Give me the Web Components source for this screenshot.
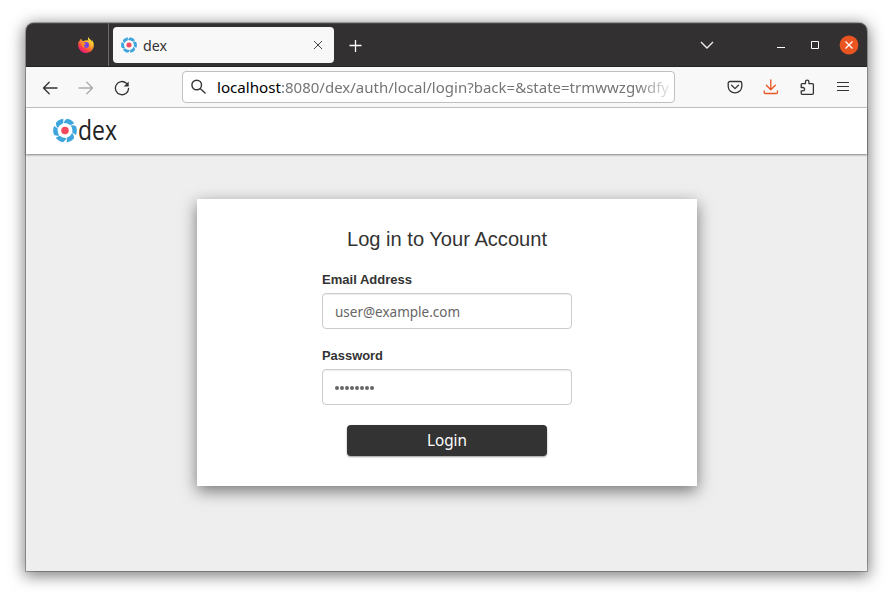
<!DOCTYPE html>
<html lang="en"><head><meta charset="utf-8"><title>dex</title>
<style>html,body{margin:0;background:#fff;height:600px;overflow:hidden}body{font-family:"Noto Sans",sans-serif}</style></head>
<body><desktop-window>
<title-bar slot="chrome"></title-bar>
<nav-bar slot="chrome"></nav-bar>
<dex-header></dex-header>
<login-card></login-card>
</desktop-window>
<script>
const define = (name, html) => customElements.define(name, class extends HTMLElement {
  constructor() { super(); this.attachShadow({ mode: 'open' }).innerHTML = html; }
});

// Single line of text condensed or widened to a given width.
customElements.define('fit-text', class extends HTMLElement {
  connectedCallback() {
    if (this.shadowRoot) return;
    const w = +this.getAttribute('w'), h = +this.getAttribute('h'), b = +this.getAttribute('base');
    const r = this.attachShadow({ mode: 'open' });
    r.innerHTML = `<style>:host{display:block;flex:none;width:${w}px;height:${h}px}svg{display:block;overflow:visible}text{fill:currentColor}</style><svg width="${w}" height="${h}"><text x="0" y="${b}" textLength="${w}" lengthAdjust="spacingAndGlyphs"></text></svg>`;
    r.querySelector('text').textContent = this.getAttribute('text');
  }
});

define('dex-mark', `<style>:host{display:block;flex:none}svg{display:block;width:100%;height:100%}</style>
<svg viewBox="-12 -12 24 24"><g fill="#3fa5dd">
${[30,90,150,210,270,330].map(a => `<path transform="rotate(${a})" d="M-4.2 -11Q0 -12.8 4.4 -10.9L2 -7.2Q-1.5 -8 -5 -5.800Q-5.600 -8.800 -4.200 -11Z"/>`).join('')}
</g><circle r="3.8" fill="#f5495d"/></svg>`);

define('fire-fox', `<style>:host{display:block;width:16px;height:16px}svg{display:block}</style>
<svg width="16" height="16" viewBox="0 0 16 16"><defs><linearGradient id="f" x1=".85" y1=".1" x2=".25" y2=".95"><stop stop-color="#fff044"/><stop offset=".4" stop-color="#ffa52c"/><stop offset=".7" stop-color="#ff4b3c"/><stop offset="1" stop-color="#e4157f"/></linearGradient></defs>
<path fill="url(#f)" d="M10.2 0C9.6 1.8 10 2.7 10.7 3.7C8.7 3 6.6 3.4 5.5 4.1L4.1 3.7L3.1 1.8C2.1 2.6 1.9 3.5 1.8 4.4L1.3 3.4C.4 5 .1 6.5.1 8.2C.3 12.5 3.7 16 8 16C12.4 16 15.8 12.6 15.8 8.3C15.8 6 15 4.3 13.9 3.1L14.2 4.9C13.3 2.8 11.2 2.2 10.2 0Z"/>
<circle cx="8" cy="8" r="3" fill="#7542e5"/><path fill="#ff8a2a" d="M3 6.1C4.9 5.3 6.4 5.8 8.1 6.6C7.9 7.5 6.7 7.4 6.1 7.9C5.8 9 6.5 9.8 7.8 9.9C6 11.6 3.3 9.5 3 6.1Z"/></svg>`);

define('desktop-window', `<style>
:host{display:flex;flex-direction:column;box-sizing:border-box;width:841px;height:548px;margin:23px 0 0 26px;background:#eee;border-radius:8px 8px 0 0;box-shadow:0 0 0 1px rgba(0,0,0,.26),0 3px 15px 2px rgba(0,0,0,.5)}
</style><slot name="chrome"></slot><slot></slot>`);

define('title-bar', `<style>
:host{display:flex;height:44px;flex:none;box-sizing:border-box;background:#333031;border-radius:8px 8px 0 0;border-bottom:1px solid #242222;box-shadow:inset 0 1px #464444;color:#fff}
.app{width:83px;box-sizing:border-box;border-right:1px solid #6b696a;padding:14px 0 0 52px}
.tab{width:221px;height:36px;margin:4px 0 0 4px;border-radius:4px;background:#f8f8f8;color:#333;display:flex;align-items:center;box-sizing:border-box;padding:0 11px 0 8px;font-size:15px}
.tab dex-mark{width:16px;height:16px}.tab fit-text{margin-left:6px}.tab svg{margin-left:auto}
svg{fill:none;display:block;flex:none}.plus{margin:16px 0 0 14px}.right{margin:12px 8px 0 auto;display:flex;align-items:center;height:20px}
</style><div class="app"><fire-fox></fire-fox></div>
<div class="tab"><dex-mark></dex-mark><fit-text text="dex" w="24" h="20" base="16"></fit-text><svg width="10" height="10" stroke="#444"><path d="M1 1l8 8M9 1L1 9"/></svg></div>
<svg class="plus" width="14" height="14" stroke="#fff" stroke-width="1.3"><path d="M7.5 1v12M1.5 6.500h12"/></svg>
<div class="right"><svg width="14" height="14" stroke="#eee" stroke-width="1.4"><path d="M1 4l6 6 6-6"/></svg>
<svg style="margin-left:63px" width="8" height="20"><path d="M0 12.5h8" stroke="#fff"/></svg>
<svg style="margin-left:26px" width="8" height="8"><path d="M.5.5h7v7h-7z" stroke="#fff"/></svg>
<svg style="margin-left:20px" width="20" height="20"><circle cx="10" cy="10" r="9.4" fill="#e95420"/><path d="M6.5 6.5l7 7M13.5 6.5l-7 7" stroke="#fff" stroke-width="1.3"/></svg></div>`);

define('nav-bar', `<style>
:host{display:flex;flex:none;height:41px;box-sizing:border-box;background:#f8f8f8;border-bottom:1px solid #c5c5c5;padding:0 16px;align-items:center}
svg{display:block;flex:none;fill:none;stroke:#333;stroke-width:1.3;stroke-linecap:round;stroke-linejoin:round}
.nav{display:flex;gap:20px;width:140px;padding-top:1px}.url{box-sizing:border-box;width:493px;height:32px;border:1px solid #bfbfbf;border-radius:4px;background:#fff;display:flex;align-items:center;padding-left:8px;font-size:15px;overflow:hidden}
.url fit-text:first-of-type{color:#000;margin-left:10px}.url fit-text:last-of-type{color:#757575;-webkit-mask:linear-gradient(90deg,#000 355px,transparent 394px)}
.tools{display:flex;gap:20px;margin-left:auto}
</style><div class="nav">
<svg width="16" height="16"><path d="M15 8H1.5M7.2 2.3L1.5 8l5.7 5.7"/></svg>
<svg width="16" height="16" style="stroke:#aaa"><path d="M1 8h13.5M8.8 2.3L14.5 8l-5.7 5.7"/></svg>
<svg width="16" height="16" stroke-width="1.4"><path d="M14.6 8.4A6.6 6.6 0 1 1 12.4 3.2"/><path d="M14.7 1.5v5H9.7z" fill="#333" stroke="none"/></svg></div>
<div class="url"><svg width="16" height="16" style="stroke-width:1.4"><circle cx="5.7" cy="6" r="4.8"/><path d="M9.4 9.7l4.7 4.3"/></svg>
<fit-text text="localhost" w="64" h="20" base="16"></fit-text><fit-text text=":8080/dex/auth/local/login?back=&amp;state=trmwwzgwdfy" w="388" h="20" base="16"></fit-text></div>
<div class="tools">
<svg width="16" height="16"><path d="M3 2.5h10a1.8 1.8 0 0 1 1.8 1.8v3a6.8 6.6 0 0 1-13.6 0v-3A1.8 1.8 0 0 1 3 2.5zM4.6 6.3L8 9.6l3.4-3.3"/></svg>
<svg width="16" height="16" style="stroke:#e95420"><path d="M7.8.8v9.7M3.3 6.2l4.5 4.5 4.5-4.5M1.2 12v1.2c0 .9.5 1.3 1.3 1.3h10.7c.8 0 1.3-.4 1.3-1.3V12"/></svg>
<svg width="16" height="16" viewBox="-.7 0 16 16"><path d="M1.5 7.5V5.6a1 1 0 0 1 1-1h3.3V2.8a1.7 1.7 0 0 1 3.4 0v1.8h3.500a1 1 0 0 1 1 1v8.700a1 1 0 0 1-1 1H2.500a1 1 0 0 1-1-1V11.900h1.700a1.700 1.700 0 0 0 0-3.400H1.500z"/></svg>
<svg width="16" height="16" style="stroke-linecap:butt;stroke-width:1.2"><path d="M2 3.500h12M2 7.500h12M2 11.500h12"/></svg></div>`);

define('dex-header', `<style>:host{display:flex;flex:none;height:46px;box-sizing:border-box;background:#fff;padding:10px 0 0 27px;box-shadow:0 1px 2px rgba(0,0,0,.45);color:#222;font-family:"Open Sans",sans-serif;font-size:27px}dex-mark{width:24px;height:25px}fit-text{margin-left:1px}</style>
<dex-mark></dex-mark><fit-text text="dex" w="39" h="25" base="22"></fit-text>`);

define('form-field', `<style>:host{display:block;width:250px}.label{font:bold 13px "Liberation Sans",sans-serif;color:#333}
.box{height:36px;box-sizing:border-box;border:1px solid #ccc;border-radius:4px;box-shadow:inset 0 1px 1px rgba(0,0,0,.075);padding:8px 12px;color:#666;font-size:14px;background:#fff;margin-top:5px}</style>
<div class="label"><slot name="label"></slot></div><div class="box"><slot></slot></div>`);

define('login-card', `<style>
:host{display:flex;flex-direction:column;align-items:center;width:500px;height:287px;box-sizing:border-box;background:#fff;margin:45px auto 0;padding-top:28px;box-shadow:0 5px 15px rgba(0,0,0,.5)}
.title{font:20px "Liberation Sans",sans-serif;color:#333}form-field{margin-top:21px}form-field+form-field{margin-top:20px}
.dots{display:flex;gap:1px;padding-top:8px}.dots i{width:4px;height:4px;border-radius:50%;background:#666}
.button{width:200px;height:31px;border-radius:4px;background:#333;margin-top:20px;color:#fff;font-size:16px;display:flex;justify-content:center;align-items:center;box-shadow:0 1px 2px rgba(0,0,0,.4)}
</style><div class="title"><fit-text text="Log in to Your Account" w="200" h="25" base="19"></fit-text></div>
<form-field><fit-text slot="label" text="Email Address" w="90" h="15" base="11"></fit-text><fit-text text="user@example.com" w="125" h="18" base="15"></fit-text></form-field>
<form-field><fit-text slot="label" text="Password" w="61" h="15" base="11"></fit-text><div class="dots">${'<i></i>'.repeat(8)}</div></form-field>
<div class="button"><fit-text text="Login" w="40" h="20" base="15"></fit-text></div>`);
</script></body></html>
